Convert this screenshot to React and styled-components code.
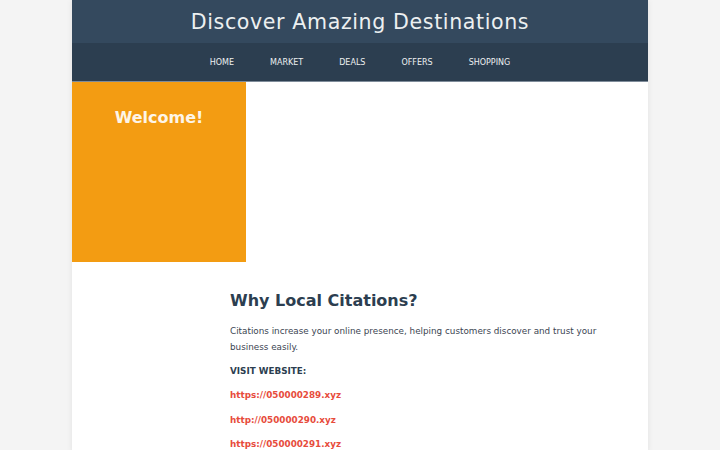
import React from "react";
import styled, { createGlobalStyle } from "styled-components";

const GlobalStyle = createGlobalStyle`
  body {
    margin: 0;
    background: #f4f4f4;
    font-family: "DejaVu Sans", sans-serif;
  }
`;

const Page = styled.div`
  width: 576px;
  margin: 0 auto;
  min-height: 450px;
  background: #fff;
  box-shadow: 0 0 6px rgba(0, 0, 0, 0.08);
`;

const Header = styled.header`
  background: #34495e;
  height: 43px;
  display: flex;
  align-items: center;
  justify-content: center;
`;

const Title = styled.h1`
  margin: 0;
  color: #ecf0f1;
  font-weight: 400;
  font-size: 20.6px;
  letter-spacing: 0.6px;
`;

const Nav = styled.nav`
  background: #2c3e50;
  height: 38px;
  display: flex;
  align-items: center;
  justify-content: center;
  gap: 36px;
  border-bottom: 1px solid #7f8c9a;
`;

const NavLink = styled.a`
  color: #ecf0f1;
  font-size: 8px;
  text-decoration: none;
  text-transform: uppercase;
`;

const Hero = styled.section`
  display: flex;
`;

const Welcome = styled.aside`
  width: 174px;
  height: 180px;
  background: #f39c12;
  display: flex;
  justify-content: center;
  padding-top: 26px;
  box-sizing: border-box;
`;

const WelcomeTitle = styled.h2`
  margin: 0;
  color: #fdf5e8;
  font-size: 16px;
  font-weight: 700;
`;

const Article = styled.main`
  padding: 29px 10px 0 158px;
`;

const Heading = styled.h2`
  margin: 0 0 13px;
  color: #2c3e50;
  font-size: 16px;
  font-weight: 700;
`;

const Text = styled.p`
  margin: 0 0 8px;
  color: #3b4552;
  font-size: 8.8px;
  line-height: 16px;
  max-width: 384px;
`;

const Label = styled.p`
  margin: 0 0 8px;
  color: #2c3e50;
  font-size: 8.8px;
  font-weight: 700;
  line-height: 16px;
`;

const Link = styled.a`
  display: block;
  margin-bottom: 8.5px;
  color: #e74c3c;
  font-size: 8.8px;
  font-weight: 700;
  line-height: 16px;
  text-decoration: none;
`;

const links = [
  "https://050000289.xyz",
  "http://050000290.xyz",
  "https://050000291.xyz",
];

export default function App() {
  return (
    <>
      <GlobalStyle />
      <Page>
        <Header>
          <Title>Discover Amazing Destinations</Title>
        </Header>
        <Nav>
          {["Home", "Market", "Deals", "Offers", "Shopping"].map((item) => (
            <NavLink key={item} href="#">
              {item}
            </NavLink>
          ))}
        </Nav>
        <Hero>
          <Welcome>
            <WelcomeTitle>Welcome!</WelcomeTitle>
          </Welcome>
        </Hero>
        <Article>
          <Heading>Why Local Citations?</Heading>
          <Text>
            Citations increase your online presence, helping customers discover
            and trust your business easily.
          </Text>
          <Label>VISIT WEBSITE:</Label>
          {links.map((url) => (
            <Link key={url} href={url}>
              {url}
            </Link>
          ))}
        </Article>
      </Page>
    </>
  );
}
